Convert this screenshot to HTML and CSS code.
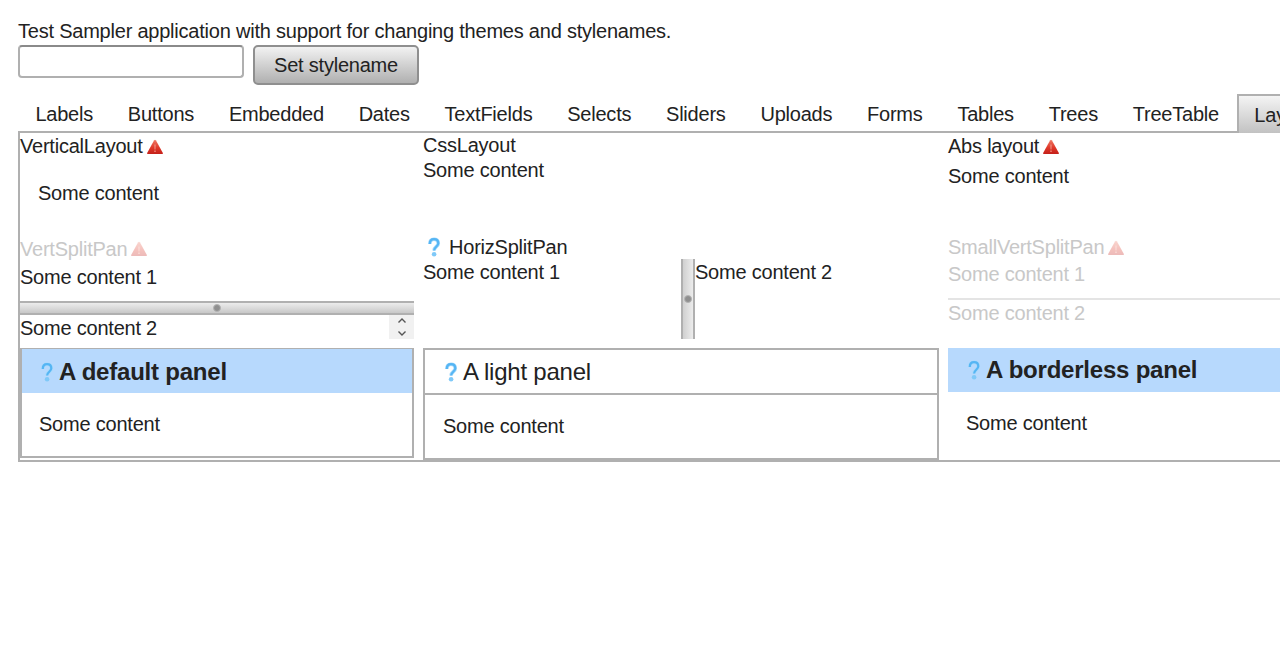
FILE: index.html
```html
<!DOCTYPE html>
<html lang="en">
<head>
<meta charset="UTF-8" />
<title>Test Sampler</title>
<link rel="stylesheet" href="styles.css">
</head>
<body>

<svg class="defs" width="0" height="0" aria-hidden="true">
  <defs>
    <linearGradient id="warn-fill" x1="0" y1="0" x2="0" y2="1">
      <stop offset="0" stop-color="#ee7a66" />
      <stop offset="0.55" stop-color="#e0392a" />
      <stop offset="1" stop-color="#c4201a" />
    </linearGradient>
    <symbol id="warn" viewBox="0 0 16 16">
      <path d="M8 .8 9 1.500 16 14.300 15.500 15H.5L0 14.300 7 1.500Z" fill="url(#warn-fill)" />
      <path d="M7.300 5.500h1.400l-.2 5H7.500ZM7.300 11.500h1.400V13H7.300Z" fill="#ee8e80" />
    </symbol>
    <symbol id="help" viewBox="0 0 16 20">
      <path d="M3.800 7C3.800 3.600 5.800 2.200 8 2.200s4.300 1.300 4.300 4.100c0 3.400-4.200 3.500-4.200 7.200" fill="none" stroke="#a6daFb" stroke-width="3.600" />
      <path d="M3.800 7C3.800 3.600 5.800 2.200 8 2.200s4.300 1.300 4.300 4.100c0 3.400-4.200 3.500-4.200 7.200" fill="none" stroke="#55b5f4" stroke-width="2.200" />
      <circle cx="8.100" cy="17.300" r="2.300" fill="#7fc9f8" />
    </symbol>
  </defs>
</svg>

<div class="app">
  <p class="intro">Test Sampler application with support for changing themes and stylenames.</p>
  <div class="style-row">
    <input class="style-input" type="text" />
    <button class="style-button">Set stylename</button>
  </div>

  <div class="tabs">
    <a class="tab">Labels</a>
    <a class="tab">Buttons</a>
    <a class="tab">Embedded</a>
    <a class="tab">Dates</a>
    <a class="tab">TextFields</a>
    <a class="tab">Selects</a>
    <a class="tab">Sliders</a>
    <a class="tab">Uploads</a>
    <a class="tab">Forms</a>
    <a class="tab">Tables</a>
    <a class="tab">Trees</a>
    <a class="tab">TreeTable</a>
    <a class="tab tab-selected">Layouts</a>
  </div>

  <div class="sheet">
    <div class="cell">
      <div class="caption">VerticalLayout<svg class="warn-icon"><use href="#warn" /></svg></div>
      <div class="vertical-content">Some content</div>
    </div>
    <div class="cell">
      <div>CssLayout</div>
      <div class="css-content">Some content</div>
    </div>
    <div class="cell">
      <div class="caption">Abs layout<svg class="warn-icon"><use href="#warn" /></svg></div>
      <div class="abs-content">Some content</div>
    </div>

    <div class="cell">
      <div class="caption caption-low disabled">VertSplitPan<svg class="warn-icon"><use href="#warn" /></svg></div>
      <div class="vsplit">
        <div class="vsplit-top">Some content 1</div>
        <div class="vsplit-bar"><span class="handle-dot"></span></div>
        <div class="vsplit-bottom">
          <span class="vsplit-text">Some content 2</span>
          <div class="scroll-arrows">
            <svg width="10" height="22" viewBox="0 0 10 22"><path d="M1.500 6.500 5 3l3.500 3.500M1.500 15.500 5 19l3.500-3.500" fill="none" stroke="#555" stroke-width="1.400" /></svg>
          </div>
        </div>
      </div>
    </div>
    <div class="cell">
      <div class="caption caption-flat"><svg class="help-icon help-caption"><use href="#help" /></svg>HorizSplitPan</div>
      <div class="hsplit">
        <div class="hsplit-left">Some content 1</div>
        <div class="hsplit-bar"><span class="handle-dot"></span></div>
        <div class="hsplit-right">Some content 2</div>
      </div>
    </div>
    <div class="cell">
      <div class="caption caption-flat disabled">SmallVertSplitPan<svg class="warn-icon"><use href="#warn" /></svg></div>
      <div class="disabled">
        <div class="small-top">Some content 1</div>
        <div class="small-bottom">Some content 2</div>
      </div>
    </div>

    <div class="panel panel-default">
      <div class="panel-caption"><svg class="help-icon"><use href="#help" /></svg>A default panel</div>
      <div class="panel-content">Some content</div>
    </div>
    <div class="panel panel-light">
      <div class="panel-caption"><svg class="help-icon"><use href="#help" /></svg>A light panel</div>
      <div class="panel-content">Some content</div>
    </div>
    <div class="panel panel-borderless">
      <div class="panel-caption"><svg class="help-icon"><use href="#help" /></svg>A borderless panel</div>
      <div class="panel-content">Some content</div>
    </div>
  </div>
</div>

</body>
</html>
```

FILE: styles.css
```css
:root {
  --line: #b0b0b0;
  --caption-blue: #b7d9fd;
  --text: #222;
  --disabled: #c8c8c8;
}

html, body {
  overflow: hidden;
}

body {
  margin: 0;
  background: #fff;
  color: var(--text);
  font-family: "Liberation Sans", Arial, sans-serif;
  font-size: 20px;
  line-height: 24px;
  letter-spacing: -0.22px;
}

.defs {
  display: block;
  height: 0;
}

.app {
  width: 1500px;
  padding: 19px 0 0 18px;
}

.intro {
  margin: 0;
  height: 26px;
}

.style-row {
  display: flex;
  align-items: flex-start;
  gap: 9px;
  height: 51px;
}

.style-input {
  box-sizing: border-box;
  width: 226px;
  height: 33px;
  border: 2px solid var(--line);
  border-top-color: #8a8a8a;
  border-radius: 4px;
  background: #fff;
}

.style-button {
  box-sizing: border-box;
  width: 166px;
  height: 40px;
  padding: 0;
  border: 2px solid #8f8f8f;
  border-radius: 5px;
  background: linear-gradient(#f2f2f2, #b0b0b0);
  color: var(--text);
  font: inherit;
  letter-spacing: inherit;
}

.tabs {
  display: flex;
  height: 35px;
}

.tab {
  padding: 6px 17.400px 0;
}

.tab-selected {
  position: relative;
  z-index: 1;
  box-sizing: border-box;
  height: 39px;
  margin: -2px 0 0 1px;
  padding: 7px 17px 0 15px;
  border: 2px solid var(--line);
  border-bottom: 0;
  background: linear-gradient(#f4f4f4, #c2c2c2);
}

.sheet {
  box-sizing: border-box;
  height: 331px;
  border: 2px solid var(--line);
  display: grid;
  grid-template-columns: 394px 516px 1fr;
  grid-template-rows: 102px 113px 1fr;
  column-gap: 9px;
}

.caption {
  display: flex;
  align-items: center;
  height: 24px;
  padding-top: 1px;
}

.caption-low {
  height: 23px;
  padding-top: 2px;
}

.caption-flat {
  padding-top: 0;
}

.warn-icon {
  width: 16px;
  height: 16px;
  margin: 1px 0 0 4px;
}

.help-icon {
  width: 16px;
  height: 20px;
  margin-right: 4px;
}

.help-caption {
  margin: 0 7px 0 3px;
}

.vertical-content {
  padding: 23px 18px 0;
}

.css-content {
  padding-top: 1px;
}

.abs-content {
  padding-top: 6px;
}

.disabled {
  color: var(--disabled);
}

.disabled .warn-icon {
  opacity: 0.3;
}

.vsplit {
  display: flex;
  flex-direction: column;
}

.vsplit-top {
  box-sizing: border-box;
  height: 41px;
  padding-top: 5px;
}

.vsplit-bar {
  box-sizing: border-box;
  height: 14px;
  border-top: 2px solid var(--line);
  border-bottom: 2px solid var(--line);
  background: linear-gradient(#ececec, #c8c8c8);
  display: flex;
  align-items: center;
  justify-content: center;
}

.vsplit-bottom {
  height: 24px;
  display: flex;
  justify-content: space-between;
}

.vsplit-text {
  padding-top: 1px;
}

.scroll-arrows {
  width: 25px;
  background: #f1f1f1;
  display: flex;
  align-items: center;
  justify-content: center;
}

.handle-dot {
  width: 8px;
  height: 8px;
  border-radius: 50%;
  background: #8f8f8f;
  border: 1px solid #b4b4b4;
  box-sizing: border-box;
}

.hsplit {
  display: flex;
  height: 80px;
}

.hsplit-left,
.hsplit-right {
  padding-top: 1px;
}

.hsplit-left {
  width: 258px;
}

.hsplit-bar {
  box-sizing: border-box;
  width: 14px;
  border-left: 2px solid var(--line);
  border-right: 2px solid var(--line);
  background: linear-gradient(90deg, #d0d0d0, #ececec);
  display: flex;
  align-items: center;
  justify-content: center;
}

.small-top {
  box-sizing: border-box;
  height: 41px;
  padding-top: 3px;
  border-bottom: 2px solid #e4e4e4;
}

.small-bottom {
  padding-top: 1px;
}

.panel {
  box-sizing: border-box;
}

.panel-caption {
  display: flex;
  align-items: center;
  font-size: 24px;
  height: 44px;
  padding-left: 17px;
}

.panel-default {
  height: 110px;
  border: 2px solid var(--line);
  border-top-width: 1px;
}

.panel-default .panel-caption {
  height: 42px;
  padding-top: 2px;
}

.panel-default .panel-caption,
.panel-borderless .panel-caption {
  background: var(--caption-blue);
  font-weight: bold;
}

.panel-content {
  padding: 19px 17px 0;
}

.panel-light {
  height: 112px;
  border: 2px solid var(--line);
}

.panel-light .panel-caption {
  height: 42px;
  padding: 1px 0 0 18px;
  border-bottom: 2px solid var(--line);
}

.panel-light .panel-content {
  padding: 19px 18px 0;
}

.panel-borderless .panel-caption {
  padding-left: 18px;
}

.panel-borderless .panel-content {
  padding-left: 18px;
}
```
